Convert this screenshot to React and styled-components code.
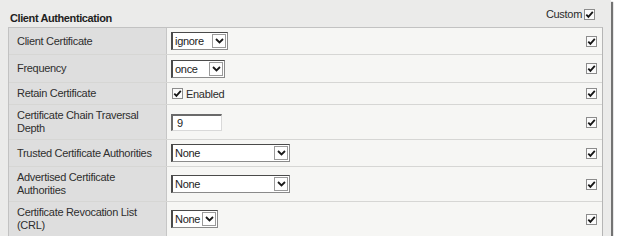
import React from 'react';
import styled, { createGlobalStyle } from 'styled-components';

const GlobalStyle = createGlobalStyle`
  html, body {
    margin: 0;
    padding: 0;
    background: #ffffff;
  }
  body {
    font-family: "Liberation Sans", Arial, sans-serif;
    font-size: 11px;
    letter-spacing: -0.3px;
    color: #2b2b2b;
  }
`;

const Page = styled.div`
  width: 611px;
  height: 236px;
  box-sizing: border-box;
  background: #ebebea;
  box-shadow: 2px 2px 1px rgba(0, 0, 0, 0.55);
  padding: 0 8px 0 8px;
`;

const Header = styled.div`
  display: flex;
  justify-content: space-between;
  align-items: flex-start;
  height: 27px;
`;

const Title = styled.div`
  font-weight: bold;
  font-size: 11px;
  letter-spacing: -0.4px;
  padding-top: 12px;
  padding-left: 2px;
  color: #1e1e1e;
`;

const Custom = styled.div`
  display: flex;
  align-items: center;
  gap: 2px;
  padding-top: 8px;
  padding-right: 8px;
  color: #2b2b2b;
`;

const Table = styled.div`
  border: 1px solid #c2c2c2;
  border-right-color: #b5b5b5;
`;

const Row = styled.div`
  display: grid;
  grid-template-columns: 158px 1fr;
  border-top: ${({ first }) => (first ? 'none' : '1px solid #d6d6d4')};
`;

const Label = styled.div`
  background: #dedede;
  border-right: 1px solid #c6c6c6;
  padding: 4px 4px 4px 8px;
  display: flex;
  align-items: center;
  line-height: 13px;
  min-height: ${({ h }) => h}px;
  color: #2e2e2e;
`;

const Value = styled.div`
  background: #f6f6f4;
  display: flex;
  align-items: center;
  justify-content: space-between;
  padding: 0 5px 0 4px;
`;

const Box = styled.span`
  display: inline-flex;
  align-items: center;
  justify-content: center;
  width: 11px;
  height: 11px;
  box-sizing: border-box;
  border: 1px solid #8c8c8c;
  background: #fbfbfb;
`;

const Check = () => (
  <Box>
    <svg width="9" height="9" viewBox="0 0 9 9">
      <path d="M1.3 4.6 L3.4 6.8 L7.8 1.8" fill="none" stroke="#151515" strokeWidth="1.8" />
    </svg>
  </Box>
);

const SelectBox = styled.div`
  display: flex;
  align-items: center;
  justify-content: space-between;
  width: ${({ w }) => w}px;
  height: 18px;
  box-sizing: border-box;
  border: 1px solid #8a8a8a;
  border-top-color: #4a4a4a;
  border-left: 2px solid #4a4a4a;
  background: #ffffff;
  padding-left: 2px;
  color: #222;
`;

const DropButton = styled.span`
  display: flex;
  align-items: center;
  justify-content: center;
  width: 14px;
  height: 14px;
  margin-right: 1px;
  box-sizing: border-box;
  border: 1px solid #9a9a9a;
  background: #ffffff;
`;

const Select = ({ w, children }) => (
  <SelectBox w={w}>
    <span>{children}</span>
    <DropButton>
      <svg width="9" height="6" viewBox="0 0 9 6">
        <path d="M1 1 L4.5 4.5 L8 1" fill="none" stroke="#1a1a1a" strokeWidth="1.8" />
      </svg>
    </DropButton>
  </SelectBox>
);

const TextInput = styled.div`
  width: 51px;
  height: 17px;
  box-sizing: border-box;
  border: 1px solid #d9d9d9;
  border-top: 2px solid #6a6a6a;
  border-left: 2px solid #6a6a6a;
  background: #ffffff;
  padding-left: 4px;
  line-height: 14px;
  color: #222;
`;

const Enabled = styled.div`
  display: flex;
  align-items: center;
  gap: 3px;
  padding-left: 1px;
`;

const rows = [
  { label: 'Client Certificate', h: 18, control: <Select w={57}>ignore</Select> },
  { label: 'Frequency', h: 19, control: <Select w={54}>once</Select> },
  {
    label: 'Retain Certificate',
    h: 13,
    control: (
      <Enabled>
        <Check />
        Enabled
      </Enabled>
    ),
  },
  { label: 'Certificate Chain Traversal Depth', h: 25, control: <TextInput>9</TextInput> },
  { label: 'Trusted Certificate Authorities', h: 18, control: <Select w={119}>None</Select> },
  { label: 'Advertised Certificate Authorities', h: 25, control: <Select w={119}>None</Select> },
  { label: 'Certificate Revocation List (CRL)', h: 23, control: <Select w={47}>None</Select> },
];

export default function App() {
  return (
    <>
      <GlobalStyle />
      <Page>
        <Header>
          <Title>Client Authentication</Title>
          <Custom>
            Custom
            <Check />
          </Custom>
        </Header>
        <Table>
          {rows.map((r, i) => (
            <Row key={r.label} first={i === 0}>
              <Label h={r.h}>{r.label}</Label>
              <Value>
                {r.control}
                <Check />
              </Value>
            </Row>
          ))}
        </Table>
      </Page>
    </>
  );
}
